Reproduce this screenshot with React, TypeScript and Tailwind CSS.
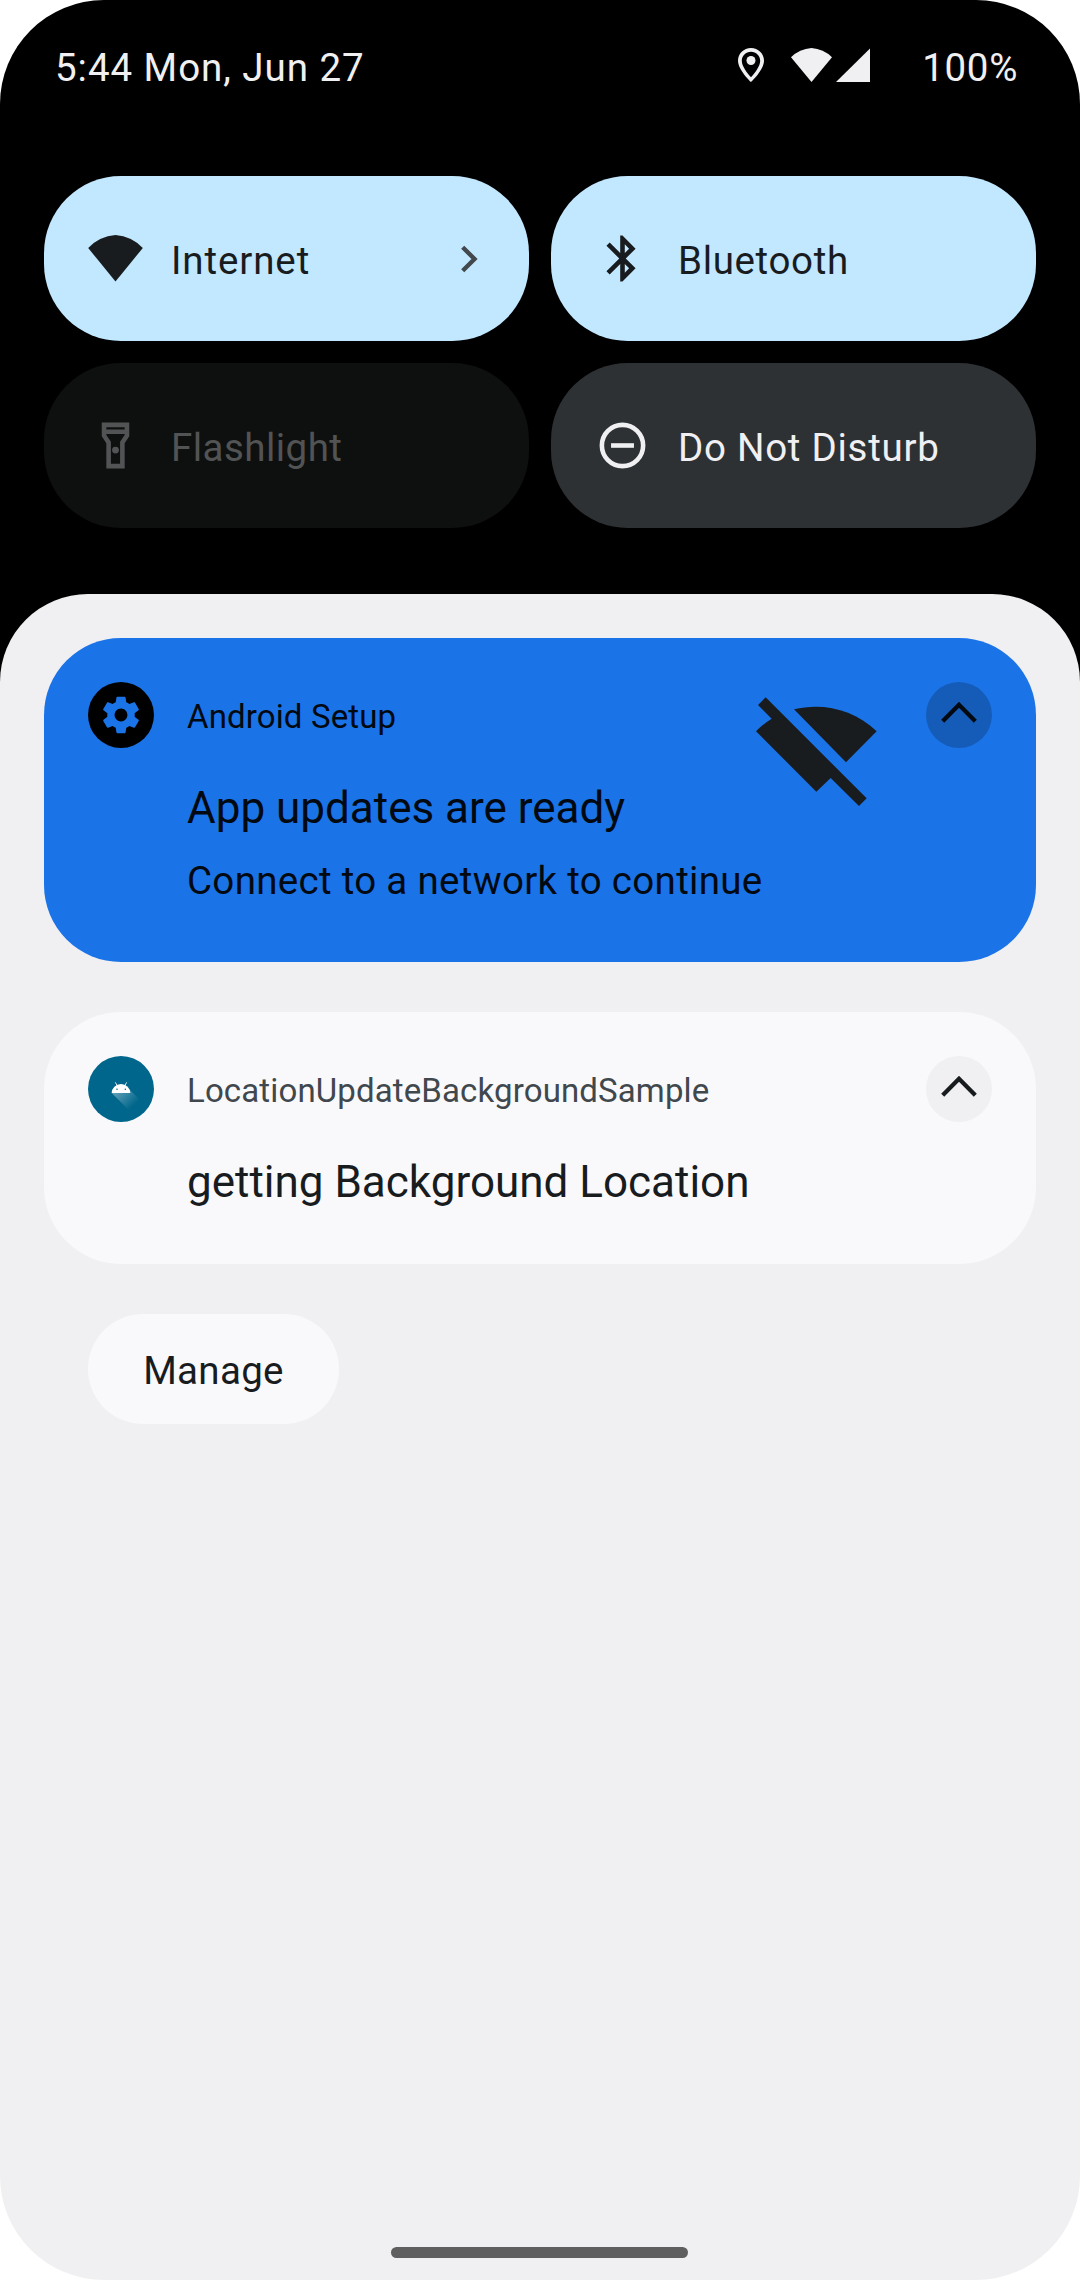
import type { ReactNode } from "react";

function BluetoothIcon() {
  return (
    <svg viewBox="0 0 24 24" className="size-[55px] shrink-0" fill="currentColor">
      <path d="M17.71 7.71 12 2h-1v7.59L6.41 5 5 6.41 10.59 12 5 17.59 6.41 19 11 14.41V22h1l5.71-5.71-4.3-4.29 4.3-4.29zM13 5.83l1.88 1.88L13 9.59V5.83zm1.88 10.46L13 18.17v-3.76l1.88 1.88z" />
    </svg>
  );
}

function WifiTileIcon() {
  return (
    <svg viewBox="0 0 55 55" className="size-[55px] shrink-0" fill="currentColor">
      <path d="M27.5 50.5 54.8 17A42 42 0 0 0 27.5 4 42 42 0 0 0 .2 17z" />
    </svg>
  );
}

function FlashlightIcon() {
  return (
    <svg viewBox="0 0 24 24" className="size-[55px] shrink-0" fill="currentColor">
      <path
        fillRule="evenodd"
        d="M6 2h12v6l-2 3v11H8V11L6 8V2zM8 4v1h8V4H8zM8 7v.4l2 3V20h4v-9.6l2-3V7H8z"
      />
      <circle cx="12" cy="14" r="1.5" />
    </svg>
  );
}

function DoNotDisturbIcon() {
  return (
    <svg viewBox="0 0 24 24" className="size-[55px] shrink-0" fill="none" stroke="currentColor" strokeWidth="2">
      <circle cx="12" cy="12" r="9" />
      <path d="M7 12h10" />
    </svg>
  );
}

function Tile({
  icon,
  label,
  tone,
  tracking,
  chevron = false,
}: {
  icon: ReactNode;
  label: string;
  tone: string;
  tracking: string;
  chevron?: boolean;
}) {
  return (
    <div className={`flex h-[165px] items-center rounded-[77px] px-[44px] ${tone}`}>
      {icon}
      <span className={`ml-[28px] flex-1 pt-[5px] text-[38.5px] leading-[46px] ${tracking}`}>{label}</span>
      {chevron && (
        <svg viewBox="0 0 24 40" className="h-[40px] w-[24px]" fill="none" stroke="#43484c" strokeWidth="4.4">
          <path d="M1.7 8.2 13.5 20 1.7 31.8" />
        </svg>
      )}
    </div>
  );
}

function CollapseButton({ tone }: { tone: string }) {
  return (
    <button className={`size-[66px] shrink-0 rounded-full ${tone}`}>
      <svg viewBox="0 0 66 66" className="size-[66px]" fill="none" stroke="currentColor" strokeWidth="4.3">
        <path d="M16.7 39.2 33 22.8l16.3 16.4" />
      </svg>
    </button>
  );
}

function GearBadge() {
  return (
    <div className="flex size-[66px] shrink-0 items-center justify-center rounded-full bg-black text-[#1b73e8]">
      <svg viewBox="0 0 24 24" className="size-[44px]" fill="currentColor">
        <path d="M19.43 12.98c.04-.32.07-.64.07-.98s-.03-.66-.07-.98l2.11-1.65c.19-.15.24-.42.12-.64l-2-3.46c-.12-.22-.39-.3-.61-.22l-2.49 1c-.52-.4-1.08-.73-1.69-.98l-.38-2.65C14.46 2.18 14.25 2 14 2h-4c-.25 0-.46.18-.49.42l-.38 2.65c-.61.25-1.17.59-1.69.98l-2.49-1c-.23-.09-.49 0-.61.22l-2 3.46c-.13.22-.07.49.12.64l2.11 1.65c-.04.32-.07.65-.07.98s.03.66.07.98l-2.11 1.65c-.19.15-.24.42-.12.64l2 3.46c.12.22.39.3.61.22l2.49-1c.52.4 1.08.73 1.69.98l.38 2.65c.03.24.24.42.49.42h4c.25 0 .46-.18.49-.42l.38-2.65c.61-.25 1.17-.59 1.69-.98l2.49 1c.23.09.49 0 .61-.22l2-3.46c.12-.22.07-.49-.12-.64l-2.11-1.65zM12 15.5c-1.93 0-3.5-1.57-3.5-3.5s1.57-3.5 3.5-3.5 3.5 1.57 3.5 3.5-1.57 3.5-3.5 3.5z" />
      </svg>
    </div>
  );
}

function AndroidBadge() {
  return (
    <svg viewBox="0 0 198 198" className="size-[66px] shrink-0">
      <defs>
        <linearGradient id="cast" gradientUnits="userSpaceOnUse" x1="92" y1="100" x2="138" y2="148">
          <stop offset="0" stopColor="#fff" stopOpacity="0.36" />
          <stop offset="1" stopColor="#fff" stopOpacity="0" />
        </linearGradient>
      </defs>
      <circle cx="99" cy="99" r="99" fill="#00668b" />
      <path d="M71 111 127 103 162 138 128 168z" fill="url(#cast)" />
      <path d="M71 111a28 27 0 0 1 56 0z" fill="#fff" />
      <path d="m82 79 6 11m28-11-6 11" stroke="#fff" strokeWidth="2.6" />
      <circle cx="87" cy="100" r="2.3" fill="#00668b" />
      <circle cx="112" cy="100" r="2.3" fill="#00668b" />
    </svg>
  );
}

function WifiOffIcon() {
  return (
    <svg viewBox="407 381 363 327" className="h-[109px] w-[121px]" fill="#191c1e">
      <path d="M436 382 739 685 716 708 631 624 588 665 407 484Q428 462 454 446L413 405z" />
      <path d="M521 418C606 397 700 417 769 484L677 577z" />
    </svg>
  );
}

function Notification({
  badge,
  app,
  title,
  body,
  picture,
  tone,
  appTone,
  buttonTone,
}: {
  badge: ReactNode;
  app: string;
  title: string;
  body?: string;
  picture?: ReactNode;
  tone: string;
  appTone: string;
  buttonTone: string;
}) {
  return (
    <article className={`flex items-start rounded-[77px] px-[44px] pt-[44px] ${tone}`}>
      {badge}
      <div className="ml-[33px] min-w-0 flex-1 whitespace-nowrap">
        <p className={`mt-[15px] text-[33px] leading-[40px] tracking-[0.004em] ${appTone}`}>{app}</p>
        <h2 className="mt-[45px] text-[44px] leading-[52px]">{title}</h2>
        {body && <p className="mt-[24px] text-[38.5px] leading-[46px] tracking-[0.008em]">{body}</p>}
      </div>
      {picture && <div className="mr-[49px] mt-[15px]">{picture}</div>}
      <CollapseButton tone={buttonTone} />
    </article>
  );
}

export default function App() {
  return (
    <div className="flex h-[2280px] w-[1080px] flex-col bg-white font-['Roboto',sans-serif]">
      <div className="h-[700px] shrink-0 rounded-t-[104px] bg-black">
        <header className="flex h-[136px] items-center pl-[55px] pr-[62px] text-[38.5px] leading-[46px] text-[#f0f0f3]">
          <span className="flex-1 tracking-[0.025em]">5:44 Mon, Jun 27</span>
          <div className="mb-[6px] flex items-center">
            <svg viewBox="0 0 26 34" className="h-[34px] w-[26px]" fill="currentColor">
              <path
                fillRule="evenodd"
                d="M13 0C5.8 0 0 5.7 0 12.7 0 22 13 34 13 34s13-12 13-21.3C26 5.7 20.2 0 13 0zM13 3.7c5.1 0 9.2 4 9.2 9 0 5.2-5 12.1-9.2 16.6-4.2-4.5-9.2-11.4-9.2-16.6 0-5 4.1-9 9.2-9z"
              />
              <circle cx="13" cy="12.5" r="4.5" />
            </svg>
            <svg viewBox="0 0 41 34" className="ml-[27px] h-[34px] w-[41px]" fill="currentColor">
              <path d="M20.5 34 41 9.3A32 32 0 0 0 20.5 0 32 32 0 0 0 0 9.3z" />
            </svg>
            <svg viewBox="0 0 34 34" className="ml-[4px] h-[34px] w-[34px]" fill="currentColor">
              <path d="M0 34 34 .6V34z" />
            </svg>
          </div>
          <span className="ml-[52px] tracking-[0.017em]">100%</span>
        </header>

        <section className="mt-[40px] grid grid-cols-2 gap-[22px] px-[44px]">
          <Tile
            icon={<WifiTileIcon />}
            label="Internet"
            tone="bg-[#c2e8ff] text-[#191c1e]"
            tracking="tracking-[0.023em]"
            chevron
          />
          <Tile
            icon={<BluetoothIcon />}
            label="Bluetooth"
            tone="bg-[#c2e8ff] text-[#191c1e]"
            tracking="tracking-[0.017em]"
          />
          <Tile
            icon={<FlashlightIcon />}
            label="Flashlight"
            tone="bg-[#0e100f] text-[#525354]"
            tracking="tracking-[0.012em]"
          />
          <Tile
            icon={<DoNotDisturbIcon />}
            label="Do Not Disturb"
            tone="bg-[#2e3133] text-[#f0f0f3]"
            tracking="tracking-[0.019em]"
          />
        </section>
      </div>

      <main className="-mt-[106px] flex flex-1 flex-col rounded-t-[88px] rounded-b-[104px] bg-[#f0f0f2] px-[44px] pt-[44px]">
        <Notification
          badge={<GearBadge />}
          app="Android Setup"
          title="App updates are ready"
          body="Connect to a network to continue"
          picture={<WifiOffIcon />}
          tone="h-[324px] bg-[#1b73e8] text-[#020910]"
          appTone="text-[#020910]"
          buttonTone="bg-[#155cb9] text-[#020910]"
        />
        <div className="h-[50px]" />
        <Notification
          badge={<AndroidBadge />}
          app="LocationUpdateBackgroundSample"
          title="getting Background Location"
          tone="h-[252px] bg-[#f9f9fc] text-[#191c1e]"
          appTone="text-[#41484d]"
          buttonTone="bg-[#f0f0f2] text-[#191c1e]"
        />
        <button className="ml-[44px] mt-[50px] h-[110px] w-[251px] rounded-full bg-[#f9f9fc] pt-[4px] text-[38.5px] leading-[46px] tracking-[0.008em] text-[#191c1e]">
          Manage
        </button>
        <div className="mb-[22px] ml-[347px] mt-auto h-[11px] w-[297px] rounded-full bg-[#5f5f5f]" />
      </main>
    </div>
  );
}
